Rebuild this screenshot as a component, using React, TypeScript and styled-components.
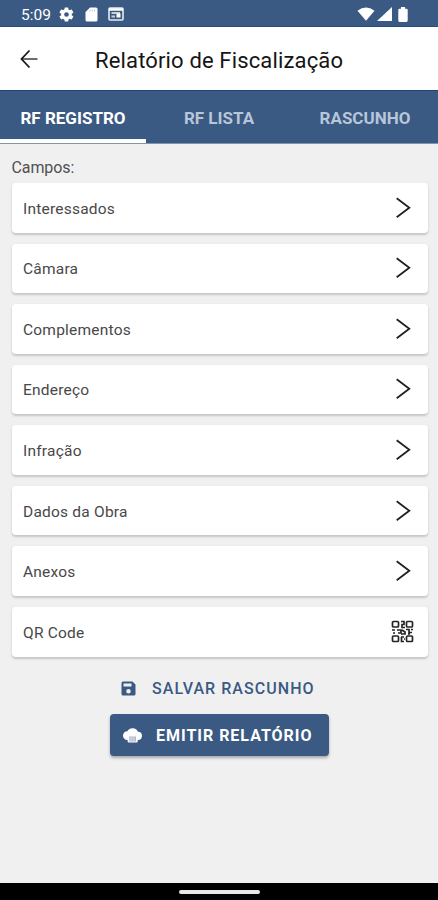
import React from "react";
import styled, { createGlobalStyle } from "styled-components";

const BLUE = "#3a5a83";

const GlobalStyle = createGlobalStyle`
  * { box-sizing: border-box; }
  body { margin: 0; background: #f0f0f0; font-family: Roboto, "Liberation Sans", sans-serif; }
  button { font-family: inherit; border: 0; padding: 0; background: none; }
  svg { display: block; flex: none; }
`;

const Screen = styled.div`
  display: flex;
  flex-direction: column;
  width: 438px;
  height: 900px;
  overflow: hidden;
  background: #f0f0f0;
`;

const StatusBar = styled.div`
  display: flex;
  align-items: center;
  height: 27px;
  padding: 2px 30px 0 21px;
  background: ${BLUE};
  border-bottom: 1px solid #264f7e;
  color: #fff;
`;

const Clock = styled.span`
  width: 37px;
  padding-top: 1px;
  font-size: 15.5px;
`;

const StatusIcons = styled.div<{ $gap: number; $end?: boolean }>`
  display: flex;
  align-items: center;
  gap: ${(p) => p.$gap}px;
  margin-left: ${(p) => (p.$end ? "auto" : "0")};
`;

const Header = styled.header`
  display: flex;
  align-items: center;
  height: 63px;
  padding: 1px 0 0 20px;
  background: #fff;
`;

const Title = styled.h1`
  margin: 2px 0 0 57px;
  font-size: 22px;
  font-weight: 400;
  letter-spacing: 0.15px;
  white-space: nowrap;
  color: #161616;
`;

const Tabs = styled.nav`
  display: grid;
  grid-template-columns: repeat(3, 1fr);
  height: 54px;
  background: ${BLUE};
  border-top: 1px solid #1d4570;
  border-bottom: 1px solid #8194ab;
`;

const Tab = styled.button<{ $active?: boolean }>`
  padding-top: 5px;
  border-bottom: 4px solid ${(p) => (p.$active ? "#fff" : "transparent")};
  color: ${(p) => (p.$active ? "#fff" : "#b7c6d9")};
  font-size: 17px;
  font-weight: 700;
  white-space: nowrap;
`;

const Content = styled.main`
  display: flex;
  flex: 1;
  flex-direction: column;
  padding: 12px 10.5px 0 11.5px;
`;

const Label = styled.div`
  height: 27px;
  line-height: 23px;
  font-size: 16px;
  letter-spacing: -0.1px;
  color: #505050;
`;

const List = styled.div`
  display: flex;
  flex-direction: column;
  gap: 11px;
`;

const Row = styled.button`
  display: flex;
  align-items: center;
  justify-content: space-between;
  height: 49.57px;
  padding: 0 14px 0 11.5px;
  border-radius: 4px;
  background: #fff;
  box-shadow: 0 2px 2px rgba(0, 0, 0, 0.14), 0 1px 4px rgba(0, 0, 0, 0.06);
  color: #484848;
  font-size: 15.5px;
  letter-spacing: 0.22px;
`;

const RowName = styled.span`
  padding-top: 2px;
`;

const Actions = styled.div`
  display: flex;
  flex-direction: column;
  align-items: center;
  padding-top: 16px;
`;

const Action = styled.button<{ $filled?: boolean }>`
  display: flex;
  align-items: center;
  width: 219px;
  height: ${(p) => (p.$filled ? 42 : 32)}px;
  margin-bottom: ${(p) => (p.$filled ? 0 : 9)}px;
  padding-top: ${(p) => (p.$filled ? 2 : 0)}px;
  padding-left: ${(p) => (p.$filled ? 13 : 11)}px;
  gap: ${(p) => (p.$filled ? 14 : 16)}px;
  border-radius: 4px;
  background: ${(p) => (p.$filled ? BLUE : "transparent")};
  box-shadow: ${(p) => (p.$filled ? "0 2px 3px rgba(0,0,0,.3)" : "none")};
  color: ${(p) => (p.$filled ? "#fff" : BLUE)};
  font-size: 16px;
  font-weight: ${(p) => (p.$filled ? 700 : 500)};
  letter-spacing: ${(p) => (p.$filled ? 0.98 : 1.05)}px;
  white-space: nowrap;
`;

const NavigationBar = styled.div`
  display: flex;
  align-items: center;
  justify-content: center;
  height: 17px;
  padding-top: 1px;
  background: #000;
`;

const HomeHandle = styled.div`
  width: 81px;
  height: 4px;
  border-radius: 2px;
  background: #e8e8e8;
`;

const Gear = () => (
  <svg width="17" height="17" viewBox="0 0 24 24" fill="#fff">
    <path d="M19.4 13a7.5 7.5 0 0 0 0-2l2.1-1.6c.2-.2.2-.4.1-.7l-2-3.4c-.1-.2-.4-.3-.6-.2l-2.5 1a7 7 0 0 0-1.7-1l-.4-2.6a.5.5 0 0 0-.5-.5h-4a.5.5 0 0 0-.5.5L9 5.1a7 7 0 0 0-1.7 1l-2.5-1c-.2-.1-.5 0-.6.2l-2 3.4c-.1.2-.1.5.1.7L4.5 11a7.5 7.5 0 0 0 0 2l-2.2 1.6c-.2.2-.2.4-.1.7l2 3.4c.1.2.4.3.6.2l2.5-1a7 7 0 0 0 1.7 1l.4 2.6c0 .3.2.5.5.5h4c.3 0 .5-.2.5-.5l.4-2.6a7 7 0 0 0 1.700-1l2.500 1c.2.1.5 0 .6-.2l2-3.400c.1-.2.1-.5-.1-.7zM12 15.3a3.300 3.300 0 1 1 0-6.600 3.300 3.300 0 0 1 0 6.600z" />
  </svg>
);

const SdCard = () => (
  <svg width="13" height="15" viewBox="0 0 13 15">
    <path d="M5 .5h6A1.500 1.500 0 0 1 12.500 2v11a1.500 1.500 0 0 1-1.500 1.500H2A1.500 1.500 0 0 1 .5 13V5z" fill="#fff" />
    <path d="M5 2.500v2M7.300 2.500v2M9.600 2.500v2" stroke="#bdcada" />
  </svg>
);

const NewsCard = () => (
  <svg width="16" height="14" viewBox="0 0 16 14">
    <rect x="1" y="1" width="14" height="12" rx="1" fill="none" stroke="#e4ebf3" strokeWidth="1.600" />
    <path d="M1 2.500h14" stroke="#fff" strokeWidth="2.500" />
    <path d="M3.500 6H12M3.500 9.500H7" stroke="#c3cfdd" strokeWidth="2" />
    <path d="M8.500 6.500h4v4h-4z" fill="#fff" />
  </svg>
);

const Wifi = () => (
  <svg width="18" height="14" viewBox="0 0 18 14">
    <path d="M.5 3.800Q9-3 17.500 3.800L9 13.800z" fill="#fff" />
  </svg>
);

const Signal = () => (
  <svg width="15" height="14" viewBox="0 0 15 14">
    <path d="M0 14 15 0v14z" fill="#fff" />
  </svg>
);

const Battery = () => (
  <svg width="10" height="15" viewBox="0 0 10 16" preserveAspectRatio="none">
    <path d="M3 0h4v1.800h1.500q1.200 0 1.200 1.200v11.500Q9.700 16 8.500 16h-7Q.3 16 .3 14.500V3q0-1.200 1.200-1.200H3z" fill="#fff" />
  </svg>
);

const BackArrow = () => (
  <svg width="18" height="20" viewBox="0 0 18 20" fill="none">
    <path d="M1 10h16.500" stroke="#666" strokeWidth="1.900" />
    <path d="M9.500 1.500 1.500 10l8 8.500" stroke="#191919" strokeWidth="1.800" />
  </svg>
);

const Chevron = () => (
  <svg width="18" height="22" viewBox="0 0 18 22" fill="none">
    <path d="M.7 1.300 13.300 10.800.7 20.300" stroke="#202020" strokeWidth="1.800" />
  </svg>
);

const QrCode = () => (
  <svg width="23" height="23" viewBox="0 0 23 23" fill="none" stroke="#252525">
    <rect x="1.500" y="1.500" width="6" height="5.500" rx="1" strokeWidth="1.700" />
    <rect x="15.500" y="1.500" width="6" height="5.500" rx="1" strokeWidth="1.700" />
    <rect x="1.500" y="16" width="6" height="5.500" rx="1" strokeWidth="1.700" />
    <rect x="15.500" y="16" width="6" height="5.500" rx="1" strokeWidth="1.700" />
    <path d="M10 1.500h3v3h-2v3h3M1 10h3M6 10h4v3H7M2 13h2M11 10l3 2v2h-4M15 9.500h3v3h3M20 9.500h2M17 14h2M10 17h3M10.500 17v4.500H13M13 19h1" strokeWidth="1.700" />
  </svg>
);

const SaveIcon = () => (
  <svg width="15" height="15" viewBox="0 0 15 15">
    <path fillRule="evenodd" d="M2 .5h9.500L14.500 3.500V13a1.500 1.500 0 0 1-1.500 1.500H2A1.500 1.500 0 0 1 .5 13V2A1.500 1.500 0 0 1 2 .5zM2.500 2.500v3h8v-3zM7.500 8a2.300 2.300 0 1 0 0 4.600A2.300 2.300 0 0 0 7.500 8z" fill={BLUE} />
  </svg>
);

const CloudPrint = () => (
  <svg width="19" height="17" viewBox="0 0 19 17">
    <path d="M4.500 13a4.400 4.400 0 0 1-.2-8.800A6 6 0 0 1 15 4.800a4.100 4.100 0 0 1-.3 8.200V14.500q0 1-1 1h-8q-1 0-1-1z" fill="#fff" />
    <path d="M6 9.500h7v5H6z" fill="#aab9cc" />
    <path d="M7 10v4M9 10v4M11 10v4" stroke="#d8e0e9" />
  </svg>
);

const fields = ["Interessados", "Câmara", "Complementos", "Endereço", "Infração", "Dados da Obra", "Anexos"];

export default function App() {
  return (
    <Screen>
      <GlobalStyle />
      <StatusBar>
        <Clock>5:09</Clock>
        <StatusIcons $gap={10}>
          <Gear />
          <SdCard />
          <NewsCard />
        </StatusIcons>
        <StatusIcons $gap={2} $end>
          <Wifi />
          <Signal />
          <span />
          <span />
          <Battery />
        </StatusIcons>
      </StatusBar>
      <Header>
        <BackArrow />
        <Title>Relatório de Fiscalização</Title>
      </Header>
      <Tabs>
        <Tab $active>RF REGISTRO</Tab>
        <Tab>RF LISTA</Tab>
        <Tab>RASCUNHO</Tab>
      </Tabs>
      <Content>
        <Label>Campos:</Label>
        <List>
          {fields.map((name) => (
            <Row key={name}>
              <RowName>{name}</RowName>
              <Chevron />
            </Row>
          ))}
          <Row>
            <RowName>QR Code</RowName>
            <QrCode />
          </Row>
        </List>
        <Actions>
          <Action>
            <SaveIcon />
            <span>SALVAR RASCUNHO</span>
          </Action>
          <Action $filled>
            <CloudPrint />
            <span>EMITIR RELATÓRIO</span>
          </Action>
        </Actions>
      </Content>
      <NavigationBar>
        <HomeHandle />
      </NavigationBar>
    </Screen>
  );
}
